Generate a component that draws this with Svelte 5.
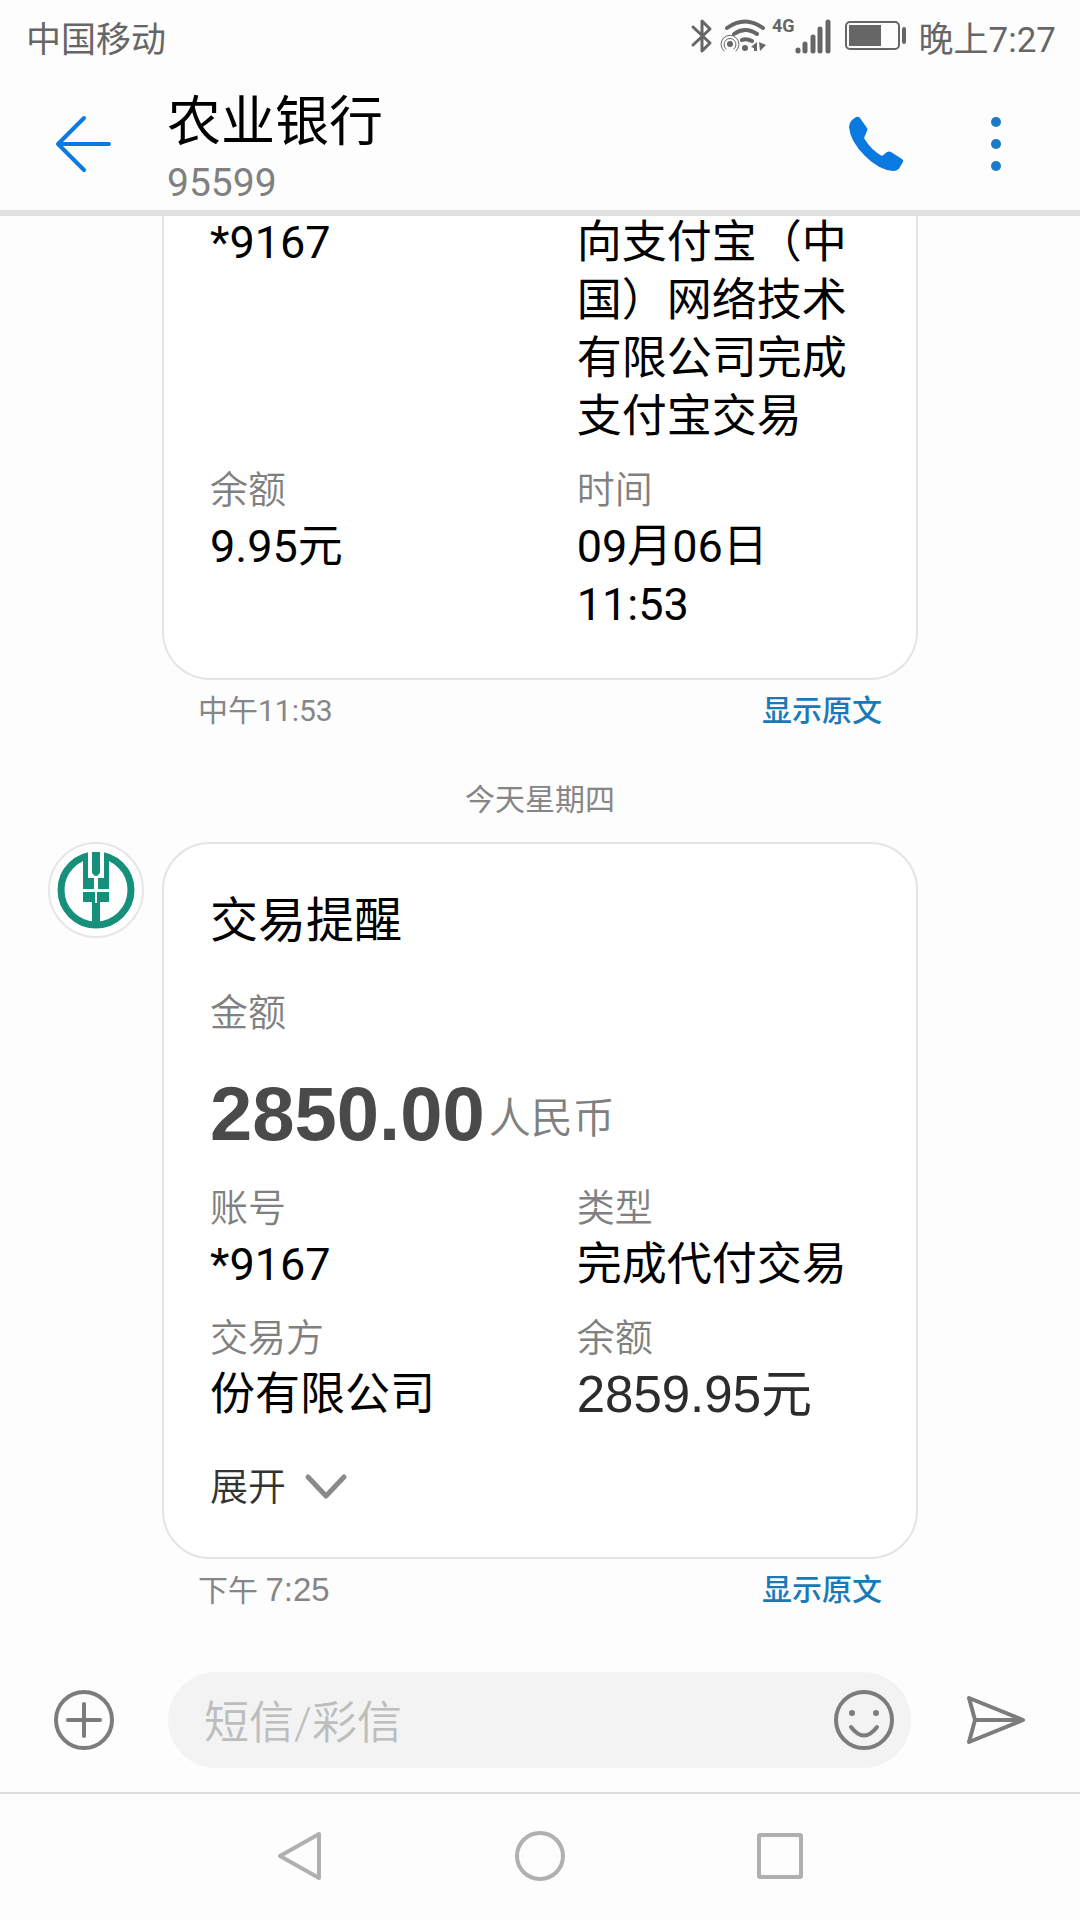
<script>
  const earlier = [
    { value: '*9167', side: { value: '向支付宝（中国）网络技术有限公司完成支付宝交易' } },
    { label: '余额', value: '9.95元', side: { label: '时间', value: '09月06日 11:53' } }
  ];

  const latest = [
    { label: '账号', value: '*9167', side: { label: '类型', value: '完成代付交易' } },
    { label: '交易方', value: '份有限公司', side: { label: '余额', value: '2859.95元', big: true } }
  ];

  let draft = $state('');
</script>

{#snippet field(item)}
  <div class="field">
    {#if item.label}<dt>{item.label}</dt>{/if}
    <dd class:big={item.big}>{item.value}</dd>
  </div>
{/snippet}

{#snippet fields(rows)}
  <dl>
    {#each rows as row}
      {@render field(row)}
      {@render field(row.side)}
    {/each}
  </dl>
{/snippet}

<div class="phone">
  <div class="status">
    <span class="carrier">中国移动</span>
    <svg class="bluetooth" width="24" height="36" viewBox="0 0 24 36" fill="none" stroke="#666" stroke-width="3" stroke-linejoin="round" stroke-linecap="round">
      <path d="M3 9 20 25 12 33V3l8 8L3 27" />
    </svg>
    <svg class="wifi" width="46" height="36" viewBox="0 0 46 36" fill="none" stroke="#666" stroke-linecap="round">
      <path stroke-width="4" d="M7 10Q25-3 43 10M14 16Q25 8 37 16M22 22Q26 20 32 23" />
      <circle cx="25" cy="30" r="3" fill="#666" stroke="none" />
      <circle cx="10" cy="26" r="3" fill="#666" stroke="none" />
      <path stroke-width="1" d="M6 31A6 6 0 1 1 14 31M4 33A9 9 0 1 1 16 33" />
      <path fill="#666" stroke="none" d="M31 29 37 24v9h-3v-3zM39 24l7 3-6 6z" />
    </svg>
    <span class="net">4G</span>
    <svg class="bars" width="36" height="36" viewBox="0 0 36 36" stroke="#666" stroke-width="5" stroke-linecap="round">
      <path d="M3 32v1M10 26v7M18 19v14M25 11v22M33 4v29" />
    </svg>
    <svg class="battery" width="62" height="32" viewBox="0 0 62 32">
      <rect x="1" y="2" width="53" height="27" rx="4" fill="none" stroke="#666" stroke-width="2" />
      <path fill="#666" d="M4 5h32v21H4z" />
      <rect x="57" y="7" width="4" height="17" rx="2" fill="#666" />
    </svg>
    <span>晚上7:27</span>
  </div>

  <header>
    <button aria-label="返回">
      <svg width="60" height="60" viewBox="0 0 60 60" fill="none" stroke="#0b7ae0" stroke-width="4" stroke-linecap="round" stroke-linejoin="round">
        <path d="M55 30H5M30 4 4 30l26 26" />
      </svg>
    </button>
    <div class="who">
      <h1>农业银行</h1>
      <p>95599</p>
    </div>
    <button aria-label="拨打电话">
      <svg width="60" height="60" viewBox="0 0 60 60" fill="#0b7ae0">
        <path d="M10 3q2-1 4 1l7 10q1 2 0 3l-3 7q7 12 18 18l5-4q2-1 4 0l11 7q2 1 1 3l-3 5q-2 4-7 4Q33 56 19 42 4 27 3 13q0-4 3-7z" />
      </svg>
    </button>
    <button class="more" aria-label="更多">
      <svg width="60" height="60" viewBox="0 0 60 60" fill="#1b7bc8">
        <circle cx="30" cy="8" r="5" />
        <circle cx="30" cy="30" r="5" />
        <circle cx="30" cy="52" r="5" />
      </svg>
    </button>
  </header>

  <main>
    <article class="message">
      <div class="card clipped">
        {@render fields(earlier)}
      </div>
      <footer>
        <time>中午11:53</time>
        <a href="#original">显示原文</a>
      </footer>
    </article>

    <p class="day">今天星期四</p>

    <article class="message">
      <svg class="avatar" width="96" height="96" viewBox="0 0 96 96">
        <circle cx="48" cy="48" r="47" fill="#fff" stroke="#e6e6e6" stroke-width="2" />
        <circle cx="48" cy="48" r="35" fill="none" stroke="#168f7b" stroke-width="7" />
        <path fill="#fff" d="M40 8h16v20H40z" />
        <path fill="#168f7b" d="M44 10h8v21l-3 3h-2l-3-3zM35 19l5-6v23h6v11H35zM61 19l-5-6v23h-6v11h11zM35 50h26v10h-9v26h-8V60h-9z" />
        <path fill="#fff" d="M47 47h2v14h-2z" />
      </svg>
      <div class="card">
        <h2>交易提醒</h2>
        <p class="label">金额</p>
        <p class="amount"><strong>2850.00</strong> <span>人民币</span></p>
        {@render fields(latest)}
        <button class="expand">
          展开
          <svg width="44" height="28" viewBox="0 0 44 28" fill="none" stroke="#8a8a8a" stroke-width="5" stroke-linecap="round" stroke-linejoin="round">
            <path d="M4 4l18 19L40 4" />
          </svg>
        </button>
      </div>
      <footer>
        <time>下午 <span class="clock">7:25</span></time>
        <a href="#original">显示原文</a>
      </footer>
    </article>
  </main>

  <form class="composer">
    <button type="button" aria-label="添加">
      <svg width="60" height="60" viewBox="0 0 60 60" fill="none" stroke="#7c7c7c" stroke-width="4" stroke-linecap="round">
        <circle cx="30" cy="30" r="28" />
        <path d="M30 14v32M14 30h32" />
      </svg>
    </button>
    <div class="box">
      <input type="text" aria-label="短信/彩信" placeholder="短信/彩信" bind:value={draft} />
      <button type="button" aria-label="表情">
        <svg width="60" height="60" viewBox="0 0 60 60" fill="none" stroke="#7c7c7c" stroke-width="4" stroke-linecap="round">
          <circle cx="30" cy="30" r="28" />
          <path d="M17 37q13 17 26 0" />
          <circle cx="18" cy="23" r="3" fill="#7c7c7c" stroke="none" />
          <circle cx="42" cy="23" r="3" fill="#7c7c7c" stroke="none" />
        </svg>
      </button>
    </div>
    <button type="button" class="send" aria-label="发送">
      <svg width="60" height="60" viewBox="0 0 60 60" fill="none" stroke="#7c7c7c" stroke-width="4" stroke-linejoin="round">
        <path d="M3 8l54 22L3 52l6-22zM9 30h48" />
      </svg>
    </button>
  </form>

  <nav>
    <button aria-label="后退">
      <svg width="52" height="52" viewBox="0 0 52 52"><path d="M45 4v44L6 26z" /></svg>
    </button>
    <button aria-label="主屏幕">
      <svg width="52" height="52" viewBox="0 0 52 52"><circle cx="26" cy="26" r="23" /></svg>
    </button>
    <button aria-label="最近任务">
      <svg width="52" height="52" viewBox="0 0 52 52"><rect x="5" y="5" width="42" height="42" rx="1" /></svg>
    </button>
  </nav>
</div>

<style>
  :global(body) {
    background: #fdfdfd;
  }
  .phone {
    display: flex;
    flex-direction: column;
    min-height: 100vh;
    background: #fdfdfd;
    color: #000;
    font-family: Roboto, "Noto Sans CJK SC", sans-serif;
  }
  h1, h2, p, dl, dd {
    margin: 0;
    font-weight: 400;
  }
  button {
    display: flex;
    align-items: center;
    padding: 0;
    border: 0;
    background: none;
    font: inherit;
    color: inherit;
  }
  svg {
    display: block;
    flex: none;
  }

  .status {
    display: flex;
    align-items: center;
    height: 72px;
    padding: 0 24px 0 26px;
    font-size: 35px;
    color: #666;
  }
  .carrier {
    flex: 1;
  }
  .bluetooth {
    margin-right: 6px;
  }
  .wifi {
    margin-right: 6px;
  }
  .net {
    align-self: flex-start;
    margin-top: 14px;
    font-size: 18px;
    line-height: 24px;
    font-weight: 700;
  }
  .battery {
    margin: 0 12px 0 14px;
  }

  header {
    position: relative;
    z-index: 1;
    display: flex;
    align-items: center;
    height: 138px;
    padding: 0 54px;
    border-bottom: 6px solid #e0e0e0;
    background: #fdfdfd;
  }
  header > button {
    padding-top: 6px;
  }
  .who {
    flex: 1;
    padding: 12px 0 0 53px;
  }
  h1 {
    font-size: 54px;
    line-height: 72px;
  }
  .who p {
    font-size: 39px;
    line-height: 48px;
    color: #808080;
  }
  .more {
    margin-left: 60px;
  }

  main {
    flex: 1;
    padding: 0 15%;
  }
  .message {
    position: relative;
  }
  .avatar {
    position: absolute;
    top: 0;
    right: 100%;
    margin-right: 18px;
  }
  .card {
    padding: 45px 46px 42px;
    border: 2px solid #e4e4e4;
    border-radius: 48px;
    background: #fff;
  }
  .clipped {
    margin-top: -6px;
    padding: 4px 46px 44px;
    border-top: 0;
    border-top-left-radius: 0;
    border-top-right-radius: 0;
  }
  h2 {
    margin-bottom: 32px;
    font-size: 48px;
    line-height: 64px;
  }
  .label, dt {
    font-size: 38px;
    font-weight: 350;
    line-height: 56px;
    color: #808080;
  }
  .amount {
    display: flex;
    align-items: flex-end;
    gap: 4px;
    margin: 28px 0 21px;
  }
  .amount strong {
    font: 700 76px/90px "Liberation Sans", sans-serif;
    color: #4a4a4a;
  }
  .amount span {
    font-size: 42px;
    font-weight: 350;
    line-height: 80px;
    color: #808080;
  }
  dl {
    display: grid;
    grid-template-columns: 5fr 4fr;
    row-gap: 16px;
  }
  dd {
    font-size: 45px;
    line-height: 58px;
  }
  .big {
    font-family: "Liberation Sans", "Noto Sans CJK SC", sans-serif;
    font-size: 51px;
    color: #2c2c2c;
  }
  .expand {
    gap: 18px;
    margin-top: 35px;
    font-size: 38px;
    font-weight: 350;
    line-height: 56px;
    color: #333;
  }
  footer {
    display: flex;
    justify-content: space-between;
    margin-top: 9px;
    padding: 0 36px;
    font-size: 30px;
    line-height: 44px;
    color: #868686;
  }
  .clock {
    font-family: "Liberation Sans", sans-serif;
    font-size: 33px;
  }
  footer a {
    color: #1a7ab8;
    font-weight: 500;
    text-decoration: none;
  }
  .day {
    margin: 45px 0 20px;
    font-size: 30px;
    line-height: 44px;
    text-align: center;
    color: #868686;
  }

  .composer {
    display: flex;
    align-items: center;
    padding: 0 54px 24px;
  }
  .box {
    flex: 1;
    display: flex;
    align-items: center;
    height: 96px;
    margin: 0 55px 0 54px;
    padding: 0 17px 0 36px;
    border-radius: 48px;
    background: #f3f3f3;
  }
  input {
    flex: 1;
    min-width: 0;
    padding: 8px 0 0;
    border: 0;
    outline: 0;
    background: none;
    font: 350 45px/60px Roboto, "Noto Sans CJK SC", sans-serif;
  }
  input::placeholder {
    color: #bdbdbd;
  }
  nav {
    display: flex;
    justify-content: center;
    gap: 188px;
    padding: 36px 0 38px;
    border-top: 2px solid #dedede;
  }
  nav svg {
    fill: none;
    stroke: #b0b0b0;
    stroke-width: 4;
    stroke-linejoin: round;
  }
</style>
